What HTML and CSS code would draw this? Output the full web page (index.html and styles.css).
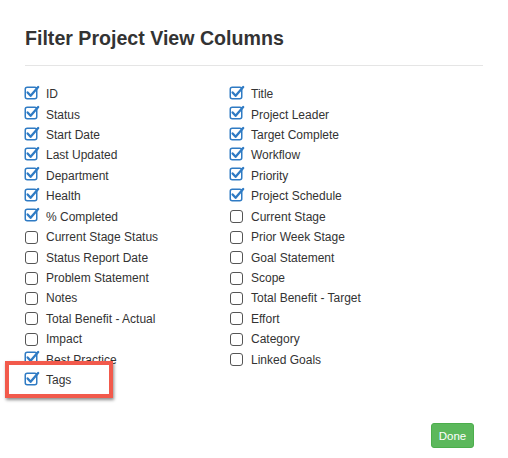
FILE: index.html
```html
<!DOCTYPE html>
<html>
<head>
<meta charset="utf-8">
<link rel="stylesheet" href="styles.css">
</head>
<body>
<div class="modal">
  <h1 class="title">Filter Project View Columns</h1>
  <div class="divider"></div>
  <div class="cols">
    <ul class="col">
      <li><svg class="cb-on" viewBox="0 0 16 16"><rect x="1.25" y="2.25" width="11.5" height="11.5" rx="2"/><path d="M3.6 7.4 L6.6 10.8 L14.2 2"/></svg>ID</li>
      <li><svg class="cb-on" viewBox="0 0 16 16"><rect x="1.25" y="2.25" width="11.5" height="11.5" rx="2"/><path d="M3.6 7.4 L6.6 10.8 L14.2 2"/></svg>Status</li>
      <li><svg class="cb-on" viewBox="0 0 16 16"><rect x="1.25" y="2.25" width="11.5" height="11.5" rx="2"/><path d="M3.6 7.4 L6.6 10.8 L14.2 2"/></svg>Start Date</li>
      <li><svg class="cb-on" viewBox="0 0 16 16"><rect x="1.25" y="2.25" width="11.5" height="11.5" rx="2"/><path d="M3.6 7.4 L6.6 10.8 L14.2 2"/></svg>Last Updated</li>
      <li><svg class="cb-on" viewBox="0 0 16 16"><rect x="1.25" y="2.25" width="11.5" height="11.5" rx="2"/><path d="M3.6 7.4 L6.6 10.8 L14.2 2"/></svg>Department</li>
      <li><svg class="cb-on" viewBox="0 0 16 16"><rect x="1.25" y="2.25" width="11.5" height="11.5" rx="2"/><path d="M3.6 7.4 L6.6 10.8 L14.2 2"/></svg>Health</li>
      <li><svg class="cb-on" viewBox="0 0 16 16"><rect x="1.25" y="2.25" width="11.5" height="11.5" rx="2"/><path d="M3.6 7.4 L6.6 10.8 L14.2 2"/></svg>% Completed</li>
      <li><span class="cb"></span>Current Stage Status</li>
      <li><span class="cb"></span>Status Report Date</li>
      <li><span class="cb"></span>Problem Statement</li>
      <li><span class="cb"></span>Notes</li>
      <li><span class="cb"></span>Total Benefit - Actual</li>
      <li><span class="cb"></span>Impact</li>
      <li><svg class="cb-on" viewBox="0 0 16 16"><rect x="1.25" y="2.25" width="11.5" height="11.5" rx="2"/><path d="M3.6 7.4 L6.6 10.8 L14.2 2"/></svg>Best Practice</li>
      <li><svg class="cb-on" viewBox="0 0 16 16"><rect x="1.25" y="2.25" width="11.5" height="11.5" rx="2"/><path d="M3.6 7.4 L6.6 10.8 L14.2 2"/></svg>Tags<span class="highlight"></span></li>
    </ul>
    <ul class="col">
      <li><svg class="cb-on" viewBox="0 0 16 16"><rect x="1.25" y="2.25" width="11.5" height="11.5" rx="2"/><path d="M3.6 7.4 L6.6 10.8 L14.2 2"/></svg>Title</li>
      <li><svg class="cb-on" viewBox="0 0 16 16"><rect x="1.25" y="2.25" width="11.5" height="11.5" rx="2"/><path d="M3.6 7.4 L6.6 10.8 L14.2 2"/></svg>Project Leader</li>
      <li><svg class="cb-on" viewBox="0 0 16 16"><rect x="1.25" y="2.25" width="11.5" height="11.5" rx="2"/><path d="M3.6 7.4 L6.6 10.8 L14.2 2"/></svg>Target Complete</li>
      <li><svg class="cb-on" viewBox="0 0 16 16"><rect x="1.25" y="2.25" width="11.5" height="11.5" rx="2"/><path d="M3.6 7.4 L6.6 10.8 L14.2 2"/></svg>Workflow</li>
      <li><svg class="cb-on" viewBox="0 0 16 16"><rect x="1.25" y="2.25" width="11.5" height="11.5" rx="2"/><path d="M3.6 7.4 L6.6 10.8 L14.2 2"/></svg>Priority</li>
      <li><svg class="cb-on" viewBox="0 0 16 16"><rect x="1.25" y="2.25" width="11.5" height="11.5" rx="2"/><path d="M3.6 7.4 L6.6 10.8 L14.2 2"/></svg>Project Schedule</li>
      <li><span class="cb"></span>Current Stage</li>
      <li><span class="cb"></span>Prior Week Stage</li>
      <li><span class="cb"></span>Goal Statement</li>
      <li><span class="cb"></span>Scope</li>
      <li><span class="cb"></span>Total Benefit - Target</li>
      <li><span class="cb"></span>Effort</li>
      <li><span class="cb"></span>Category</li>
      <li><span class="cb"></span>Linked Goals</li>
    </ul>
  </div>
  <div class="footer">
    <button class="done">Done</button>
  </div>
</div>
</body>
</html>
```

FILE: styles.css
```css
* { box-sizing: border-box; }
html, body {
  margin: 0;
  padding: 0;
  background: #fff;
}
body {
  font-family: "Liberation Sans", Arial, sans-serif;
  color: #333;
  width: 508px;
  height: 458px;
  overflow: hidden;
}
.modal {
  padding: 25px 25px 0 25px;
  position: relative;
}
.title {
  margin: 0;
  font-size: 19.6px;
  font-weight: bold;
  line-height: 26px;
  color: #333;
}
.divider {
  margin-top: 14px;
  width: 458px;
  height: 1px;
  background: #e5e5e5;
}
.cols {
  display: flex;
  margin-top: 18px;
}
.col {
  list-style: none;
  margin: 0;
  padding: 0;
  width: 205px;
}
.col li {
  display: flex;
  align-items: center;
  height: 20.43px;
  font-size: 12px;
  color: #333;
  position: relative;
}
.cb {
  width: 13px;
  height: 13px;
  border: 1.3px solid #555;
  border-radius: 3px;
  margin-right: 8px;
  flex: none;
  background: #fff;
}
.cb-on {
  width: 16px;
  height: 16px;
  margin-left: -1px;
  margin-right: 6px;
  margin-top: -3px;
  flex: none;
  overflow: visible;
}
.cb-on rect {
  fill: #fff;
  stroke: #2f7bc4;
  stroke-width: 1.5;
}
.cb-on path {
  fill: none;
  stroke: #2f7bc4;
  stroke-width: 2.3;
  stroke-linecap: round;
  stroke-linejoin: round;
}
.highlight {
  position: absolute;
  left: -20px;
  top: -9px;
  width: 108px;
  height: 37px;
  border: 4px solid #f25a4c;
  box-shadow: 1px 2px 3px rgba(0,0,0,0.45);
  pointer-events: none;
}
.footer {
  display: flex;
  justify-content: flex-end;
  padding-right: 9px;
  margin-top: 33px;
}
.done {
  width: 43px;
  height: 25px;
  background: #5cb85c;
  border: 1px solid #4cae4c;
  border-radius: 3px;
  color: #fff;
  font-family: "Liberation Sans", Arial, sans-serif;
  font-size: 11.5px;
  padding: 0;
}
```
